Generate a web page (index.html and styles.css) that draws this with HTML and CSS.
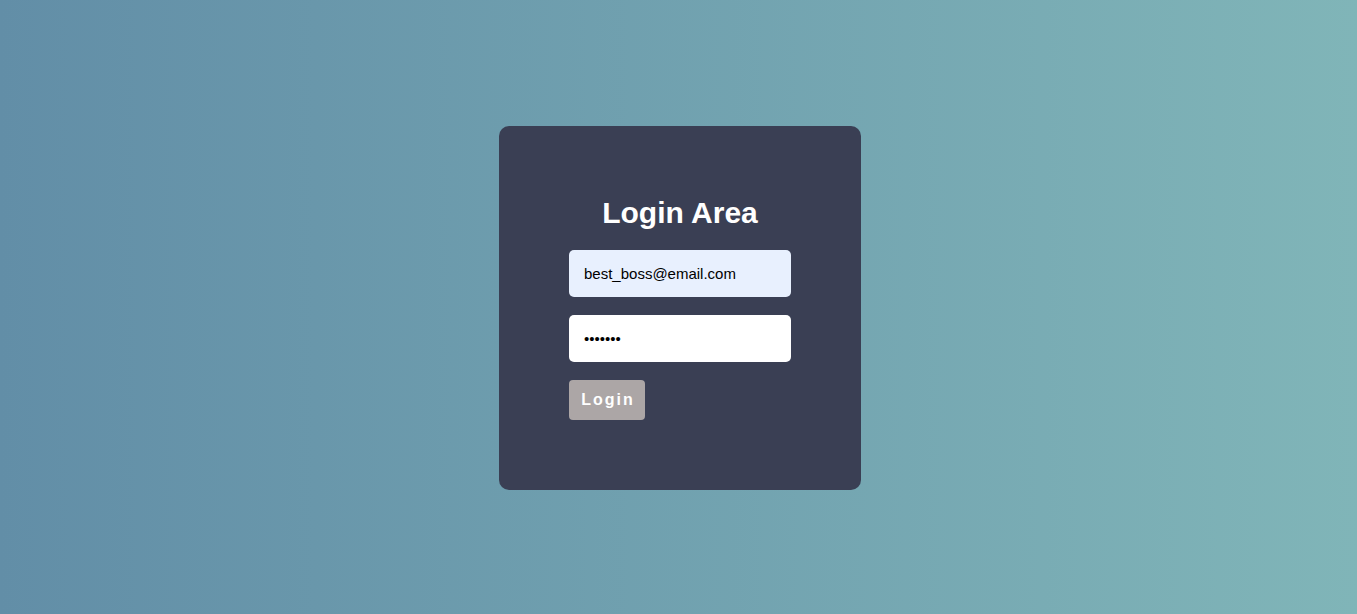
FILE: index.html
```html
<!DOCTYPE html>
<html lang="en">
<head>
<meta charset="utf-8">
<title>Login Area</title>
<link rel="stylesheet" href="styles.css">
</head>
<body>
<main class="page">
  <form class="card">
    <h2 class="title">Login Area</h2>
    <input class="field field-email" type="email" value="best_boss@email.com">
    <input class="field" type="password" value="1234567">
    <button class="btn" type="button">Login</button>
  </form>
</main>
</body>
</html>
```
FILE: styles.css
```css
* { box-sizing: border-box; }
html, body { margin: 0; height: 100%; }
body {
  font-family: "Liberation Sans", Arial, sans-serif;
  background: linear-gradient(to right, #628ea7, #80b5b8);
}
.page {
  height: 100%;
  display: flex;
  align-items: center;
  justify-content: center;
  padding-left: 3px;
  padding-top: 2px;
}
.card {
  width: 362px;
  height: 364px;
  background: #3a3f54;
  border-radius: 10px;
  padding: 70px;
  display: flex;
  flex-direction: column;
  align-items: flex-start;
}
.title {
  align-self: stretch;
  text-align: center;
  color: #fff;
  font-size: 30px;
  line-height: 34px;
  font-weight: bold;
  margin: 0 0 20px;
}
.field {
  width: 222px;
  height: 47px;
  border: none;
  border-radius: 5px;
  padding: 0 15px;
  font-family: "Liberation Sans", Arial, sans-serif;
  font-size: 15px;
  color: #000;
  background: #fff;
  margin: 0 0 18px;
  outline: none;
}
.field-email { background: #e8f0fe; }
.btn {
  width: 76px;
  height: 40px;
  border: none;
  border-radius: 4px;
  background: #aca6a6;
  color: #fff;
  font-family: "Liberation Sans", Arial, sans-serif;
  font-size: 16px;
  font-weight: bold;
  letter-spacing: 2px;
  padding: 0 0 0 2px;
}
```
